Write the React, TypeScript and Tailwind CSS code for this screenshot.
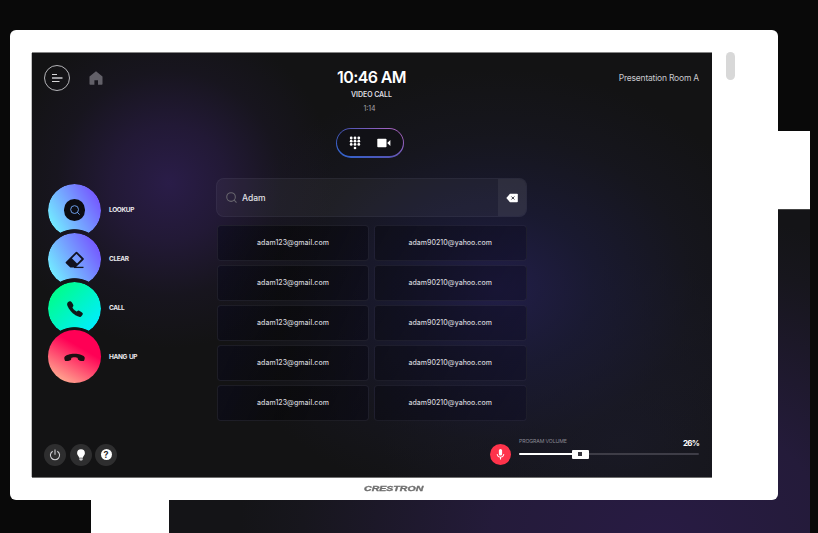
import React from "react";
import { IoCall } from "react-icons/io5";
import { MdMic } from "react-icons/md";

function SearchGlyph({ className }: { className: string }) {
  return (
    <svg viewBox="0 0 12 12" fill="none" stroke="currentColor" strokeWidth="1.15" className={className}>
      <circle cx="5.5" cy="5.5" r="4.7" />
      <path d="M8.9 8.9 11.2 11.2" strokeLinecap="round" />
    </svg>
  );
}

function EraserGlyph() {
  return (
    <svg viewBox="0 0 20 18" className="mt-px h-[18px] w-5">
      <path d="M11.5 1.6 17.9 8 10.2 15.7H5.7L1.5 11.6Z" fill="none" stroke="#121220" strokeWidth="1.8" strokeLinejoin="round" />
      <path d="M6.3 6.8 12.6 13.1 9.8 15.9H5.7L1.4 11.6Z" fill="#121220" />
      <path d="M9 16.4H18.5" stroke="#121220" strokeWidth="1.3" />
    </svg>
  );
}

function DialpadGlyph() {
  return (
    <svg viewBox="0 0 12 14" className="h-[14px] w-3" fill="currentColor">
      {[2, 5.2, 8.4].map((y) =>
        [2.2, 6, 9.8].map((x) => <circle key={`${x}-${y}`} cx={x} cy={y} r="1.4" />),
      )}
      <circle cx="6" cy="12" r="1.3" />
    </svg>
  );
}

const actions = [
  {
    label: "LOOKUP",
    width: "tracking-[-0.36px]",
    fill: "bg-[linear-gradient(60deg,#72f5ff_8%,#75a4ff_48%,#7557ff_88%)]",
    icon: (
      <span className="flex size-[21.5px] items-center justify-center rounded-full bg-[#0c0c12] text-[#6fa2ee]">
        <SearchGlyph className="size-[10px]" />
      </span>
    ),
  },
  {
    label: "CLEAR",
    width: "tracking-[-0.38px]",
    fill: "bg-[linear-gradient(60deg,#72f5ff_8%,#75a4ff_48%,#7557ff_88%)]",
    icon: <EraserGlyph />,
  },
  {
    label: "CALL",
    width: "tracking-[-0.38px]",
    fill: "bg-[linear-gradient(135deg,#00ff85_10%,#00f5c5_50%,#00edff_88%)]",
    icon: <IoCall className="mt-px size-[18px] text-[#0e1718]" />,
  },
  {
    label: "HANG UP",
    width: "tracking-[-0.38px] [word-spacing:0.8px]",
    fill: "bg-[linear-gradient(210deg,#ff0055_35%,#ffad92_90%)]",
    icon: <IoCall className="mt-[4px] size-[19px] rotate-[135deg] text-[#1c1012]" />,
  },
];

function ActionRail() {
  return (
    <nav className="flex w-[184px] flex-col pl-4 pt-[5.7px]">
      {actions.map((a, i) => (
        <div key={a.label} className="-mb-[4.1px] flex h-[53px] items-center gap-2">
          <button
            className={
              "flex size-[53px] items-center justify-center rounded-full " +
              a.fill +
              (i < 3 ? " [mask-image:radial-gradient(circle_at_26.5px_75.4px,transparent_29.8px,black_30.6px)]" : "")
            }
          >
            {a.icon}
          </button>
          <span className={"whitespace-nowrap pt-px text-[6.5px] font-bold text-[#e9e9ed] " + a.width}>{a.label}</span>
        </div>
      ))}
    </nav>
  );
}

function Header() {
  return (
    <header className="grid h-[125px] grid-cols-3 px-3 pt-3">
      <div className="flex h-[26px] items-center">
        <button className="flex size-[26px] items-center justify-center rounded-full border border-[#b4b4b8]">
          <svg viewBox="0 0 12 10" className="h-[10px] w-3">
            <path d="M1 1.5H6M1 8.5H8.5" stroke="#d6d6d8" strokeWidth="1.1" />
            <path d="M1 5H11.5" stroke="#9a9a9e" strokeWidth="1.8" />
          </svg>
        </button>
        <svg viewBox="0 0 14 14" className="ml-[18.5px] size-[14px]">
          <path d="M7 .2 13.5 5.5V13a.8.8 0 0 1-.8.8H9V9.3H5.4v4.5H1.3a.8.8 0 0 1-.8-.8V5.5Z" fill="#626068" />
        </svg>
      </div>
      <div className="flex flex-col items-center">
        <div className="mr-px h-6 whitespace-nowrap text-[16px] font-semibold leading-[25px] tracking-[-0.6px] text-white">10:46 AM</div>
        <div className="mr-px mt-px h-[10px] whitespace-nowrap text-[7px] font-semibold leading-[10px] tracking-[-0.06px] text-[#dedee2]">VIDEO CALL</div>
        <div className="mr-[5px] mt-[4px] h-[10px] text-[7px] leading-[10px] text-[#a5a5aa]">1:14</div>
        <div className="mr-[4px] mt-[13.5px] h-[30px] w-[68px] rounded-full bg-[linear-gradient(35deg,#2d65cf,#5355b5_50%,#bd68c6)] p-[1.2px]">
          <div className="flex size-full items-center justify-center gap-[16px] rounded-full bg-[#111116] text-white">
            <DialpadGlyph />
            <svg viewBox="0 0 14 10" className="h-[10px] w-[14px]" fill="currentColor">
              <rect x=".3" y=".7" width="9.2" height="8.6" rx=".8" />
              <path d="M10.2 5 13.4 1.9V8.1Z" />
            </svg>
          </div>
        </div>
      </div>
      <div className="h-[26px] whitespace-nowrap text-right text-[8.5px] leading-[26px] tracking-[-0.2px] text-[#c9c9cf]">
        <span className="pr-[1px]">Presentation Room A</span>
      </div>
    </header>
  );
}

function Directory() {
  const card =
    "flex h-9 items-center justify-center rounded-[4px] border pt-[2px] text-[7px] font-medium text-[#d2d2d9]";
  return (
    <section className="w-[310.5px]">
      <div className="flex h-[39px] items-stretch overflow-hidden rounded-[8px] border border-[#8080a0]/10 bg-white/[0.045]">
        <div className="flex flex-1 items-center pl-[9px]">
          <SearchGlyph className="size-[11px] text-[#68666e]" />
          <span className="ml-[5px] pt-px text-[8.5px] font-medium tracking-[-0.02px] text-[#e2e2e6]">Adam</span>
        </div>
        <button className="flex w-7 items-center justify-center bg-white/[0.06]">
          <svg viewBox="0 0 12 10" className="h-[10px] w-3">
            <path d="M4 .8H11a.8.8 0 0 1 .8.8V8.4a.8.8 0 0 1-.8.8H4L.3 5Z" fill="#fff" />
            <path d="m5.4 3.5 3 3m0-3-3 3" stroke="#24232d" strokeWidth=".9" />
          </svg>
        </button>
      </div>
      <div className="ml-px mt-[7.5px] grid grid-cols-[152px_152.5px] gap-x-[5px] gap-y-1">
        {[0, 1, 2, 3, 4].map((row) => (
          <React.Fragment key={row}>
            <div className={card + " border-[#808090]/15 bg-[linear-gradient(115deg,rgba(10,10,28,.6),rgba(9,9,11,.75)_45%,rgba(10,9,22,.6))]"}>
              <span className="tracking-[0.03px]">adam123@gmail.com</span>
            </div>
            <div className={card + " border-[#8080a0]/12 bg-[linear-gradient(120deg,rgba(10,10,18,.6),rgba(14,12,36,.45))]"}>
              <span className="tracking-[0.01px]">adam90210@yahoo.com</span>
            </div>
          </React.Fragment>
        ))}
      </div>
    </section>
  );
}

function Footer() {
  const round = "flex size-[22px] items-center justify-center rounded-full bg-[#2e2e2f] text-white";
  return (
    <footer className="flex h-[44px] items-start justify-between pl-3 pr-[13px]">
      <div className="flex gap-[3.5px] pt-[10.5px]">
        <button className={round}>
          <svg viewBox="0 0 12 12" className="size-3" fill="none" stroke="#d0d0d3" strokeWidth="1.1">
            <path d="M3.7 2.2a4.6 4.6 0 1 0 4.6 0M6 .6V5.8" />
          </svg>
        </button>
        <button className={round}>
          <svg viewBox="0 0 10 12" className="h-3 w-[10px]" fill="currentColor">
            <path d="M5 .3a3.9 3.9 0 0 0-3.9 3.9C1.1 6 2.8 6.9 3.1 8.7H6.9C7.2 6.9 8.9 6 8.9 4.2A3.9 3.9 0 0 0 5 .3Z" />
            <path d="M3.3 9.2H6.7V10.5L6 11.4H4L3.3 10.5Z" fill="#c8c8ca" />
          </svg>
        </button>
        <button className={round}>
          <span className="flex size-[11px] items-center justify-center rounded-full bg-white text-[9px] font-bold leading-none text-[#2e2e2f]">?</span>
        </button>
      </div>
      <div className="flex">
        <button className="mt-[10.5px] flex size-[21px] items-center justify-center rounded-full bg-[#ff334b] text-white">
          <MdMic className="size-[13px]" />
        </button>
        <div className="ml-[8.5px] w-[180px]">
          <div className="flex h-[17px] items-center justify-between leading-none">
            <span className="whitespace-nowrap pt-px text-[5.2px] tracking-[-0.12px] text-[#8b8995]">PROGRAM VOLUME</span>
            <span className="pt-[2px] text-[8px] font-bold tracking-[-0.75px] text-white">26%</span>
          </div>
          <div className="flex h-2 items-center">
            <div className="h-[2px] w-[52.5px] rounded-l bg-white" />
            <div className="flex h-[9px] w-[17px] items-center justify-center rounded-[1px] bg-white">
              <div className="size-1 bg-[#34333b]" />
            </div>
            <div className="h-[2px] flex-1 rounded-r bg-[#3e3d47]" />
          </div>
        </div>
      </div>
    </footer>
  );
}

export default function App() {
  return (
    <div className="relative h-[533px] w-[818px] overflow-hidden bg-[#090909] font-[Inter,'Open_Sans',sans-serif]">
      <div className="absolute left-[91px] top-[131px] h-[402px] w-[719px] bg-white" />
      <div className="absolute left-[169px] top-[209px] h-[324px] w-[641px] border-t border-[#444] bg-[radial-gradient(ellipse_420px_330px_at_490px_330px,#281b43,#241b3a_40%,#17161d_85%,#141417)]" />
      <main className="relative ml-[9.5px] mt-[30px] h-[470px] w-[768px] overflow-hidden rounded-[6px] bg-white pl-[22.5px] pt-[23px]">
        <div className="flex">
          <div className="flex h-[424px] w-[680px] flex-col bg-[#131314] bg-[radial-gradient(circle_165px_at_137px_130px,rgba(43,29,75,.95),rgba(39,27,65,.75)_35%,rgba(30,24,46,.4)_68%,transparent),radial-gradient(ellipse_280px_220px_at_465px_235px,rgba(35,31,78,.9),rgba(28,28,60,.7)_35%,rgba(25,25,40,.45)_70%,transparent),radial-gradient(ellipse_240px_180px_at_590px_390px,rgba(29,29,46,.6),transparent)] shadow-[0_-1px_0_#858585,0_1px_0_#707070,-1px_0_0_#c0c0c0]">
            <Header />
            <div className="flex h-[255px]">
              <ActionRail />
              <Directory />
            </div>
            <Footer />
          </div>
          <div className="ml-[13.5px] mt-[-1px] h-[28px] w-[9px] rounded-full bg-[#d8d8d8]" />
        </div>
        <div className="ml-[332px] mt-[7px] h-[10px] w-fit origin-left scale-x-[1.32] font-['Liberation_Sans',sans-serif] text-[8px] font-bold italic leading-[10px] text-[#707070] [-webkit-text-stroke:0.35px_#707070]">
          CRESTRON
        </div>
      </main>
    </div>
  );
}
